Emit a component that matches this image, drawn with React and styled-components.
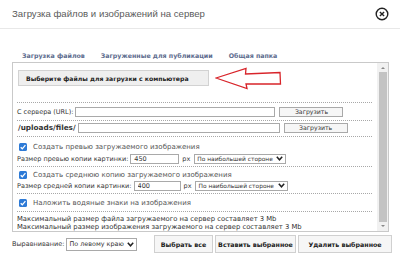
import React from "react";
import styled, { createGlobalStyle } from "styled-components";

const Global = createGlobalStyle`
  html, body { margin: 0; padding: 0; background: #fff; }
  body { font-family: "DejaVu Sans", Verdana, sans-serif; }
  * { box-sizing: border-box; }
`;

const CloseIcon = () => (
  <svg width="14" height="14" viewBox="0 0 14 14">
    <circle cx="7" cy="7" r="5.8" fill="none" stroke="#222" strokeWidth="1.4" />
    <path d="M4.9 4.9 L9.1 9.1 M9.1 4.9 L4.9 9.1" stroke="#222" strokeWidth="1.4" />
  </svg>
);

const Chevron = () => (
  <svg width="7" height="5" viewBox="0 0 7 5">
    <path d="M0.8 0.8 L3.5 3.8 L6.2 0.8" fill="none" stroke="#222" strokeWidth="1.5" />
  </svg>
);

const Check = () => (
  <CheckBox>
    <svg width="8" height="8" viewBox="0 0 8 8">
      <path d="M1.7 4.2 L3.3 5.8 L6.4 2.2" fill="none" stroke="#fff" strokeWidth="1.3" />
    </svg>
  </CheckBox>
);

const Arrow = () => (
  <ArrowWrap>
    <svg width="70" height="26" viewBox="0 0 70 26">
      <path
        d="M1 11 L31 1.5 L30.5 7 L65 5.5 L65.5 17 L31 17 L32 21.5 Z"
        fill="none"
        stroke="#d8242a"
        strokeWidth="1.3"
      />
    </svg>
  </ArrowWrap>
);

const App = () => {
  const tabs = ["Загрузка файлов", "Загруженные для публикации", "Общая папка"];
  return (
    <>
      <Global />
      <Modal>
        <Header>
          <Title>Загрузка файлов и изображений на сервер</Title>
          <CloseIcon />
        </Header>
        <Body>
          <Tabs>
            {tabs.map((t) => (
              <Tab key={t}>{t}</Tab>
            ))}
          </Tabs>
          <Panel>
            <Content>
              <Section $pad="7px 0 16px">
                <PickButton>Выберите файлы для загрузки с компьютера</PickButton>
                <Arrow />
              </Section>
              <Section $pad="3px 0 3px">
                <Row>
                  <Label>С сервера (URL):</Label>
                  <TextInput $w={200} />
                  <SmallButton>Загрузить</SmallButton>
                </Row>
              </Section>
              <Section $pad="1px 0 3px">
                <Row>
                  <PathLabel>/uploads/files/</PathLabel>
                  <TextInput $w={202} />
                  <SmallButton>Загрузить</SmallButton>
                </Row>
              </Section>
              <Section $pad="5px 0 2px" $gap={1}>
                <CheckRow>
                  <Check />
                  <span>Создать превью загружаемого изображения</span>
                </CheckRow>
                <Row>
                  <Label>Размер превью копии картинки:</Label>
                  <TextInput $w={49} defaultValue="450" />
                  <Unit>px</Unit>
                  <SelectBox $w={92}>
                    <span>По наибольшей стороне</span>
                    <Chevron />
                  </SelectBox>
                </Row>
              </Section>
              <Section $pad="3px 0 2px">
                <CheckRow>
                  <Check />
                  <span>Создать среднюю копию загружаемого изображения</span>
                </CheckRow>
                <Row>
                  <Label>Размер средней копии картинки:</Label>
                  <TextInput $w={47} defaultValue="400" />
                  <Unit>px</Unit>
                  <SelectBox $w={93}>
                    <span>По наибольшей стороне</span>
                    <Chevron />
                  </SelectBox>
                </Row>
              </Section>
              <Section $pad="4px 0 3px">
                <CheckRow>
                  <Check />
                  <span>Наложить водяные знаки на изображения</span>
                </CheckRow>
              </Section>
              <Section $pad="3px 0 0" $last>
                <Info>Максимальный размер файла загружаемого на сервер составляет 3 Mb</Info>
                <Info>Максимальный размер изображения загружаемого на сервер составляет 3 Mb</Info>
              </Section>
            </Content>
            <Scrollbar>
              <ScrollArrow $up />
              <Thumb />
              <ScrollArrow />
            </Scrollbar>
          </Panel>
          <Footer>
            <AlignGroup>
              <Label>Выравнивание:</Label>
              <SelectBox $w={71} $h={13} $fs={6.4}>
                <span>По левому краю</span>
                <Chevron />
              </SelectBox>
            </AlignGroup>
            <Buttons>
              <FooterButton $w={59}>Выбрать все</FooterButton>
              <FooterButton $w={81}>Вставить выбранное</FooterButton>
              <FooterButton $w={94}>Удалить выбранное</FooterButton>
            </Buttons>
          </Footer>
        </Body>
      </Modal>
    </>
  );
};

const Modal = styled.div`
  width: 400px;
  height: 257px;
  display: flex;
  flex-direction: column;
  background: #fff;
`;

const Header = styled.div`
  flex: none;
  height: 29px;
  display: flex;
  align-items: center;
  justify-content: space-between;
  padding: 0 11px 1px 12px;
  border-bottom: 1px solid #e8e8e8;
`;

const Title = styled.div`
  font-family: "Liberation Sans", Arial, sans-serif;
  font-size: 9.6px;
  color: #5a5a5a;
`;

const Body = styled.div`
  padding: 0 11px 0 12px;
`;

const Tabs = styled.div`
  display: flex;
  gap: 16px;
  padding: 0 0 2px 10px;
  height: 33px;
  align-items: flex-end;
`;

const Tab = styled.div`
  font-size: 6.3px;
  font-weight: bold;
  color: #5d6c8e;
  line-height: 8px;
`;

const Panel = styled.div`
  width: 377px;
  height: 170px;
  border: 1px solid #c9c9c9;
  display: flex;
  overflow: hidden;
`;

const Content = styled.div`
  flex: 1;
  padding: 0 5px 0 4px;
  display: flex;
  flex-direction: column;
`;

const Section = styled.div`
  flex: none;
  position: relative;
  padding: ${(p) => p.$pad};
  border-bottom: ${(p) => (p.$last ? "none" : "1px dotted #a8a8a8")};
  display: flex;
  flex-direction: column;
  gap: ${(p) => p.$gap || 0}px;
`;

const PickButton = styled.div`
  width: 191px;
  height: 16px;
  margin-left: 1px;
  display: flex;
  align-items: center;
  padding-left: 7px;
  background: #efefef;
  border: 1px solid #d2d2d2;
  font-size: 6.15px;
  font-weight: bold;
  color: #222;
  white-space: nowrap;
`;

const ArrowWrap = styled.div`
  position: absolute;
  left: 198px;
  top: 4px;
  line-height: 0;
`;

const Row = styled.div`
  display: flex;
  align-items: center;
  height: 11px;
  font-size: 6.5px;
  color: #333;
`;

const Label = styled.span`
  font-size: 6.5px;
  color: #333;
  margin-right: 2px;
  white-space: nowrap;
`;

const PathLabel = styled.span`
  font-size: 7.3px;
  font-weight: bold;
  color: #333;
  margin-right: 2px;
  margin-left: 1px;
`;

const TextInput = styled.input`
  width: ${(p) => p.$w}px;
  height: 10px;
  border: 1px solid #a9a9a9;
  padding: 0 3px;
  font-family: "DejaVu Sans", Verdana, sans-serif;
  font-size: 6.5px;
  color: #333;
  outline: none;
  background: #fff;
`;

const SmallButton = styled.div`
  width: 64px;
  height: 10px;
  margin-left: 4px;
  border: 1px solid #a9a9a9;
  background: #f6f6f6;
  font-size: 6.2px;
  color: #333;
  display: flex;
  align-items: center;
  justify-content: center;
`;

const Unit = styled.span`
  font-size: 6.5px;
  color: #333;
  margin: 0 4px 0 3px;
`;

const SelectBox = styled.div`
  width: ${(p) => p.$w}px;
  height: ${(p) => p.$h || 10}px;
  border: 1px solid #a9a9a9;
  background: #fff;
  display: flex;
  align-items: center;
  justify-content: space-between;
  gap: 2px;
  padding: 0 2px 0 2px;
  font-size: ${(p) => p.$fs || 5.9}px;
  color: #333;
  white-space: nowrap;
`;

const CheckRow = styled.div`
  display: flex;
  align-items: center;
  gap: 6px;
  height: 10px;
  padding-left: 2px;
  font-size: 7px;
  color: #555;
`;

const CheckBox = styled.span`
  width: 8px;
  height: 8px;
  border-radius: 1.5px;
  background: #2d7ad6;
  display: flex;
  align-items: center;
  justify-content: center;
  line-height: 0;
`;

const Info = styled.div`
  font-size: 6.8px;
  line-height: 8px;
  color: #333;
  white-space: nowrap;
`;

const Scrollbar = styled.div`
  width: 11px;
  background: #f1f1f1;
  display: flex;
  flex-direction: column;
  align-items: center;
  padding: 2px 1px;
  gap: 3px;
`;

const ScrollArrow = styled.span`
  width: 0;
  height: 0;
  border-left: 2px solid transparent;
  border-right: 2px solid transparent;
  ${(p) =>
    p.$up
      ? "border-bottom: 2px solid #888; margin-top: 2px;"
      : "border-top: 2px solid #888; margin-bottom: 2px;"}
`;

const Thumb = styled.div`
  flex: 1;
  width: 8px;
  background: #c3c3c3;
`;

const Footer = styled.div`
  display: flex;
  align-items: center;
  justify-content: space-between;
  height: 18px;
  margin-top: 3px;
`;

const AlignGroup = styled.div`
  display: flex;
  align-items: center;
`;

const Buttons = styled.div`
  display: flex;
  gap: 2px;
  margin-right: -3px;
`;

const FooterButton = styled.div`
  width: ${(p) => p.$w}px;
  height: 18px;
  border: 1px solid #d0d0d0;
  background: #f6f6f6;
  display: flex;
  align-items: center;
  justify-content: center;
  font-size: 6.3px;
  font-weight: bold;
  color: #222;
  white-space: nowrap;
`;

export default App;
